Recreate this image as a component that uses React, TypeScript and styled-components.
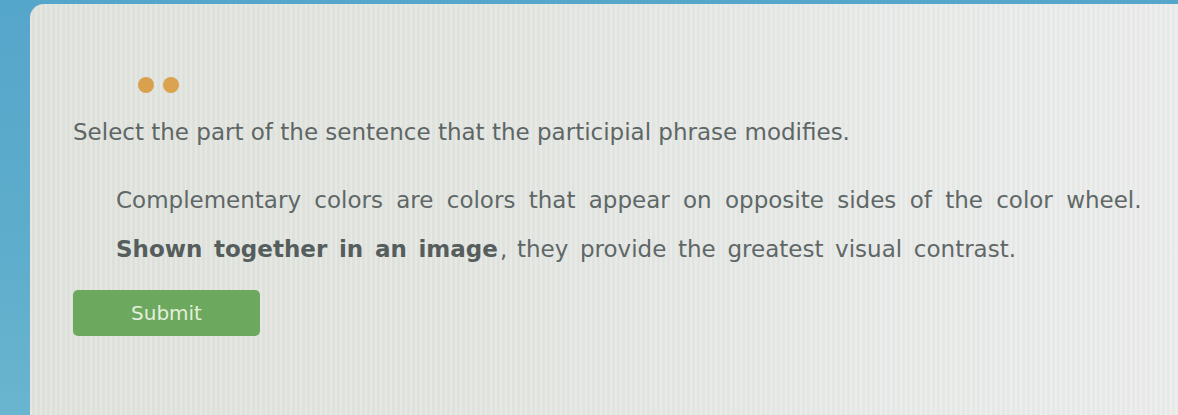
import React from "react";
import styled, { createGlobalStyle } from "styled-components";

const GlobalStyle = createGlobalStyle`
  html, body {
    margin: 0;
    padding: 0;
    width: 100%;
    height: 100%;
    overflow: hidden;
  }
  body {
    background: linear-gradient(180deg, #55a6cb 0%, #5eadcc 60%, #6ab5cf 100%);
    font-family: "DejaVu Sans", Verdana, sans-serif;
  }
  #root {
    height: 100%;
  }
`;

const Page = styled.div`
  height: 100%;
  box-sizing: border-box;
  padding: 4px 0 0 30px;
  display: flex;
`;

const Card = styled.main`
  flex: 1;
  border-top-left-radius: 14px;
  padding: 73px 0 0 43px;
  display: flex;
  flex-direction: column;
  align-items: flex-start;
  background:
    repeating-linear-gradient(
      90deg,
      rgba(255, 235, 240, 0.28) 0px,
      rgba(255, 235, 240, 0.28) 2px,
      rgba(200, 225, 212, 0.22) 2px,
      rgba(200, 225, 212, 0.22) 5px
    ),
    linear-gradient(90deg, #dfe2dc 0%, #e3e5e1 40%, #eaebea 75%, #ededed 100%);
`;

const Progress = styled.div`
  display: flex;
  gap: 9px;
  margin-left: 65px;
`;

const Dot = styled.span<{ $color: string }>`
  width: 16px;
  height: 16px;
  border-radius: 50%;
  background: ${(p) => p.$color};
`;

const Prompt = styled.h1`
  margin: 24px 0 0;
  font-size: 23px;
  line-height: 30px;
  font-weight: 400;
  color: #5e6666;
  letter-spacing: 0;
`;

const Passage = styled.p`
  margin: 29px 0 0 43px;
  font-size: 23px;
  line-height: 49px;
  color: #5f6767;
`;

const Line = styled.span<{ $pad: number }>`
  display: block;
  white-space: nowrap;
  & > span {
    padding: 0 ${(p) => p.$pad}px;
  }
  & > span:first-child {
    padding-left: 0;
  }
`;

const Word = styled.span<{ $bold?: boolean }>`
  font-weight: ${(p) => (p.$bold ? 700 : 400)};
  color: ${(p) => (p.$bold ? "#555d5d" : "inherit")};
  cursor: pointer;
`;

const SubmitButton = styled.button`
  margin-top: 16px;
  width: 187px;
  height: 46px;
  border: none;
  border-radius: 5px;
  background: #6da85f;
  color: #e4efdb;
  font-family: "DejaVu Sans", Verdana, sans-serif;
  font-size: 20px;
  cursor: pointer;
`;

type Token = { text: string; bold?: boolean; tail?: string };

const sentences: { pad: number; words: Token[] }[] = [
  {
    pad: 3,
    words: "Complementary colors are colors that appear on opposite sides of the color wheel."
      .split(" ")
      .map((text) => ({ text })),
  },
  {
    pad: 2.2,
    words: [
      ...["Shown", "together", "in", "an"].map((text) => ({ text, bold: true })),
      { text: "image", bold: true, tail: "," },
      ...["they", "provide", "the", "greatest", "visual", "contrast."].map((text) => ({ text })),
    ],
  },
];

export default function App() {
  return (
    <>
      <GlobalStyle />
      <Page>
        <Card>
          <Progress>
            <Dot $color="#d9a04e" />
            <Dot $color="#dba24f" />
          </Progress>
          <Prompt>Select the part of the sentence that the participial phrase modifies.</Prompt>
          <Passage>
            {sentences.map((line, i) => (
              <Line key={i} $pad={line.pad}>
                {line.words.map((w, j) => (
                  <React.Fragment key={j}>
                    <Word $bold={w.bold}>{w.text}</Word>
                    {w.tail ?? null}
                    {j < line.words.length - 1 ? " " : null}
                  </React.Fragment>
                ))}
              </Line>
            ))}
          </Passage>
          <SubmitButton>Submit</SubmitButton>
        </Card>
      </Page>
    </>
  );
}
